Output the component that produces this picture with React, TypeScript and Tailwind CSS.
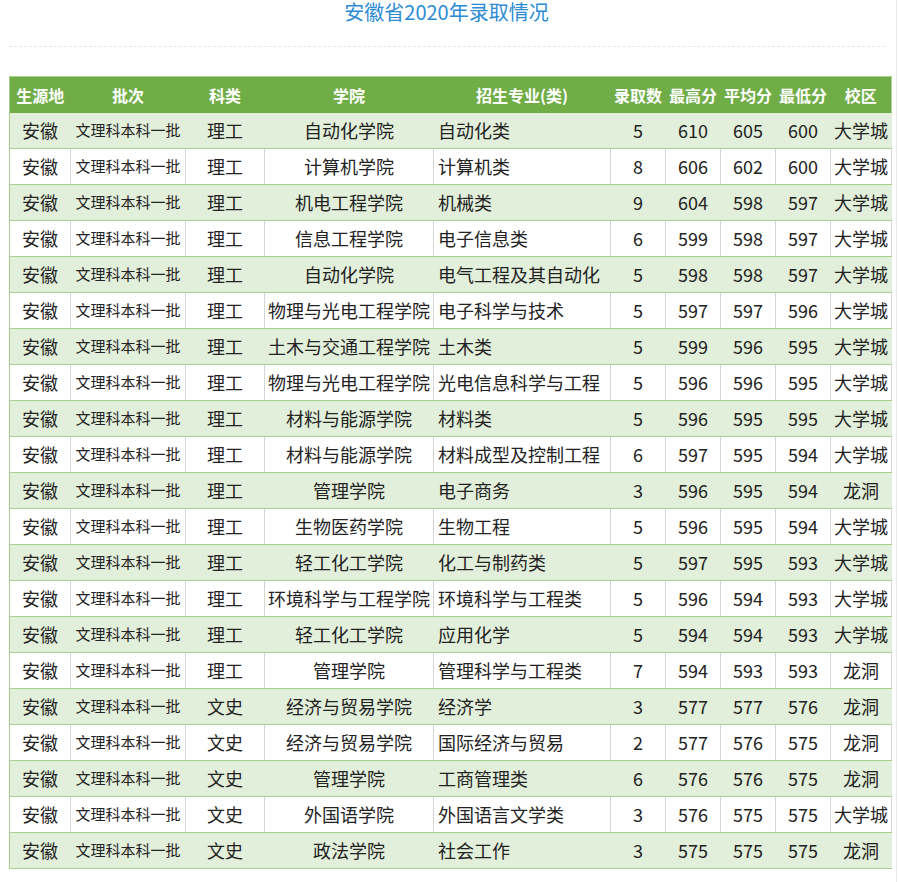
import React from "react"

type Row = [string, string, string, string, string, number, number, number, number, string]

const rows: Row[] = [
  ["安徽", "文理科本科一批", "理工", "自动化学院", "自动化类", 5, 610, 605, 600, "大学城"],
  ["安徽", "文理科本科一批", "理工", "计算机学院", "计算机类", 8, 606, 602, 600, "大学城"],
  ["安徽", "文理科本科一批", "理工", "机电工程学院", "机械类", 9, 604, 598, 597, "大学城"],
  ["安徽", "文理科本科一批", "理工", "信息工程学院", "电子信息类", 6, 599, 598, 597, "大学城"],
  ["安徽", "文理科本科一批", "理工", "自动化学院", "电气工程及其自动化", 5, 598, 598, 597, "大学城"],
  ["安徽", "文理科本科一批", "理工", "物理与光电工程学院", "电子科学与技术", 5, 597, 597, 596, "大学城"],
  ["安徽", "文理科本科一批", "理工", "土木与交通工程学院", "土木类", 5, 599, 596, 595, "大学城"],
  ["安徽", "文理科本科一批", "理工", "物理与光电工程学院", "光电信息科学与工程", 5, 596, 596, 595, "大学城"],
  ["安徽", "文理科本科一批", "理工", "材料与能源学院", "材料类", 5, 596, 595, 595, "大学城"],
  ["安徽", "文理科本科一批", "理工", "材料与能源学院", "材料成型及控制工程", 6, 597, 595, 594, "大学城"],
  ["安徽", "文理科本科一批", "理工", "管理学院", "电子商务", 3, 596, 595, 594, "龙洞"],
  ["安徽", "文理科本科一批", "理工", "生物医药学院", "生物工程", 5, 596, 595, 594, "大学城"],
  ["安徽", "文理科本科一批", "理工", "轻工化工学院", "化工与制药类", 5, 597, 595, 593, "大学城"],
  ["安徽", "文理科本科一批", "理工", "环境科学与工程学院", "环境科学与工程类", 5, 596, 594, 593, "大学城"],
  ["安徽", "文理科本科一批", "理工", "轻工化工学院", "应用化学", 5, 594, 594, 593, "大学城"],
  ["安徽", "文理科本科一批", "理工", "管理学院", "管理科学与工程类", 7, 594, 593, 593, "龙洞"],
  ["安徽", "文理科本科一批", "文史", "经济与贸易学院", "经济学", 3, 577, 577, 576, "龙洞"],
  ["安徽", "文理科本科一批", "文史", "经济与贸易学院", "国际经济与贸易", 2, 577, 576, 575, "龙洞"],
  ["安徽", "文理科本科一批", "文史", "管理学院", "工商管理类", 6, 576, 576, 575, "龙洞"],
  ["安徽", "文理科本科一批", "文史", "外国语学院", "外国语言文学类", 3, 576, 575, 575, "大学城"],
  ["安徽", "文理科本科一批", "文史", "政法学院", "社会工作", 3, 575, 575, 575, "龙洞"],
]

const headers = ["生源地", "批次", "科类", "学院", "招生专业(类)", "录取数", "最高分", "平均分", "最低分", "校区"]
const widths = ["w-[61px]", "w-[115px]", "w-[79px]", "w-[169px]", "w-[177px]", "w-[55px]", "w-[55px]", "w-[55px]", "w-[55px]", "w-[61px]"]

export default function App() {
  return (
    <div className="min-h-[882px] w-[897px] border-r border-[#e6e6e6] bg-white pl-[9px] font-['Noto_Sans_CJK_SC',sans-serif]">
      <h1 className="h-[24px] pr-[12px] text-center text-[20px] leading-[24px] text-[#2b8bd3]">安徽省2020年录取情况</h1>
      <div className="mt-[22px] w-[876px] border-t border-dashed border-[#e8e8e8]" />

      <table className="mt-[29px] w-[882px] table-fixed border-collapse border border-[#a9d08e]">
        <colgroup>
          {widths.map((w, i) => (
            <col key={i} className={w} />
          ))}
        </colgroup>
        <thead>
          <tr className="h-[36px] bg-[#70ad47]">
            {headers.map((h, i) => (
              <th key={i} className="whitespace-nowrap p-0 text-center text-[16px] font-bold text-white">
                {h}
              </th>
            ))}
          </tr>
        </thead>
        <tbody>
          {rows.map((r, i) => {
            const green = i % 2 === 0
            const cell = `h-[36px] whitespace-nowrap p-0 border-b border-[#a9d08e] border-r ${green ? "border-r-[#e2efda]" : "border-r-[#d4d4d4]"}`
            return (
              <tr key={i} className={green ? "bg-[#e2efda]" : "bg-white"}>
                <td className={`${cell} text-center text-[18px] text-[#222]`}>{r[0]}</td>
                <td className={`${cell} text-center text-[15px] text-[#222]`}>{r[1]}</td>
                <td className={`${cell} text-center text-[18px] text-[#222]`}>{r[2]}</td>
                <td className={`${cell} text-center text-[18px] text-[#222]`}>{r[3]}</td>
                <td className={`${cell} pl-[4px] text-left text-[18px] text-[#222]`}>{r[4]}</td>
                <td className={`${cell} text-center text-[18px] text-[#222]`}>{r[5]}</td>
                <td className={`${cell} text-center text-[18px] text-[#222]`}>{r[6]}</td>
                <td className={`${cell} text-center text-[18px] text-[#222]`}>{r[7]}</td>
                <td className={`${cell} text-center text-[18px] text-[#222]`}>{r[8]}</td>
                <td className={`${cell} text-center text-[18px] text-[#222]`}>{r[9]}</td>
              </tr>
            )
          })}
        </tbody>
      </table>
    </div>
  )
}
